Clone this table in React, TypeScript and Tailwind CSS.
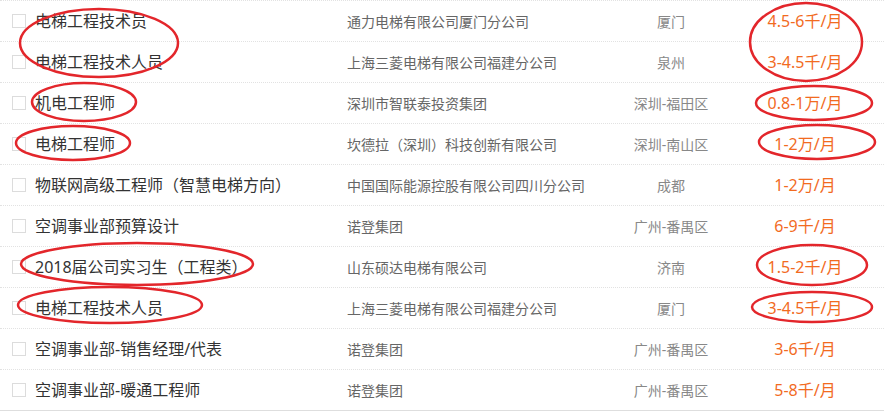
import React from "react";

type Job = { title: string; company: string; city: string; salary: string };

const jobs: Job[] = [
  { title: "电梯工程技术员", company: "通力电梯有限公司厦门分公司", city: "厦门", salary: "4.5-6千/月" },
  { title: "电梯工程技术人员", company: "上海三菱电梯有限公司福建分公司", city: "泉州", salary: "3-4.5千/月" },
  { title: "机电工程师", company: "深圳市智联泰投资集团", city: "深圳-福田区", salary: "0.8-1万/月" },
  { title: "电梯工程师", company: "坎德拉（深圳）科技创新有限公司", city: "深圳-南山区", salary: "1-2万/月" },
  { title: "物联网高级工程师（智慧电梯方向）", company: "中国国际能源控股有限公司四川分公司", city: "成都", salary: "1-2万/月" },
  { title: "空调事业部预算设计", company: "诺登集团", city: "广州-番禺区", salary: "6-9千/月" },
  { title: "2018届公司实习生（工程类）", company: "山东硕达电梯有限公司", city: "济南", salary: "1.5-2千/月" },
  { title: "电梯工程技术人员", company: "上海三菱电梯有限公司福建分公司", city: "厦门", salary: "3-4.5千/月" },
  { title: "空调事业部-销售经理/代表", company: "诺登集团", city: "广州-番禺区", salary: "3-6千/月" },
  { title: "空调事业部-暖通工程师", company: "诺登集团", city: "广州-番禺区", salary: "5-8千/月" },
];

// hand-drawn red circles over the list
const marks = [
  { cx: 99, cy: 43, rx: 79, ry: 34 },
  { cx: 84, cy: 102, rx: 52, ry: 19 },
  { cx: 73, cy: 143, rx: 57, ry: 17 },
  { cx: 137, cy: 264, rx: 116, ry: 21 },
  { cx: 110, cy: 305, rx: 92, ry: 18 },
  { cx: 806, cy: 42, rx: 56, ry: 39 },
  { cx: 814, cy: 103, rx: 58, ry: 17 },
  { cx: 817, cy: 142, rx: 58, ry: 17 },
  { cx: 812, cy: 265, rx: 55, ry: 20 },
  { cx: 812, cy: 307, rx: 60, ry: 15 },
];

function Row({ job }: { job: Job }) {
  return (
    <li className="flex h-[41px] items-center border-b border-dotted border-[#e2e2e2]">
      <div className="flex w-[347px] shrink-0 items-center">
        <span className="ml-[12px] mr-[9px] h-[14px] w-[14px] shrink-0 border border-[#dcdcdc] bg-white" />
        <span className="whitespace-nowrap text-[16px] text-[#333]">{job.title}</span>
      </div>
      <div className="w-[273px] shrink-0 whitespace-nowrap text-[14px] text-[#666]">{job.company}</div>
      <div className="w-[102px] shrink-0 whitespace-nowrap text-center text-[14px] text-[#888]">{job.city}</div>
      <div className="ml-[8px] w-[150px] shrink-0 whitespace-nowrap text-center text-[16px] text-[#f26b1f]">
        {job.salary}
      </div>
    </li>
  );
}

export default function App() {
  return (
    <div
      className="relative h-[419px] w-[884px] overflow-hidden bg-white"
      style={{ fontFamily: '"Noto Sans", "Noto Sans CJK SC", sans-serif' }}
    >
      <ul className="border-t border-dotted border-[#e2e2e2] [&>li:last-child]:border-solid [&>li:last-child]:border-[#dedede]">
        {jobs.map((job, i) => (
          <Row key={i} job={job} />
        ))}
      </ul>

      <svg className="pointer-events-none absolute inset-0" width="884" height="419">
        {marks.map((m, i) => (
          <ellipse
            key={i}
            cx={m.cx}
            cy={m.cy}
            rx={m.rx}
            ry={m.ry}
            fill="none"
            stroke="#e3262b"
            strokeWidth="2.5"
          />
        ))}
      </svg>
    </div>
  );
}
